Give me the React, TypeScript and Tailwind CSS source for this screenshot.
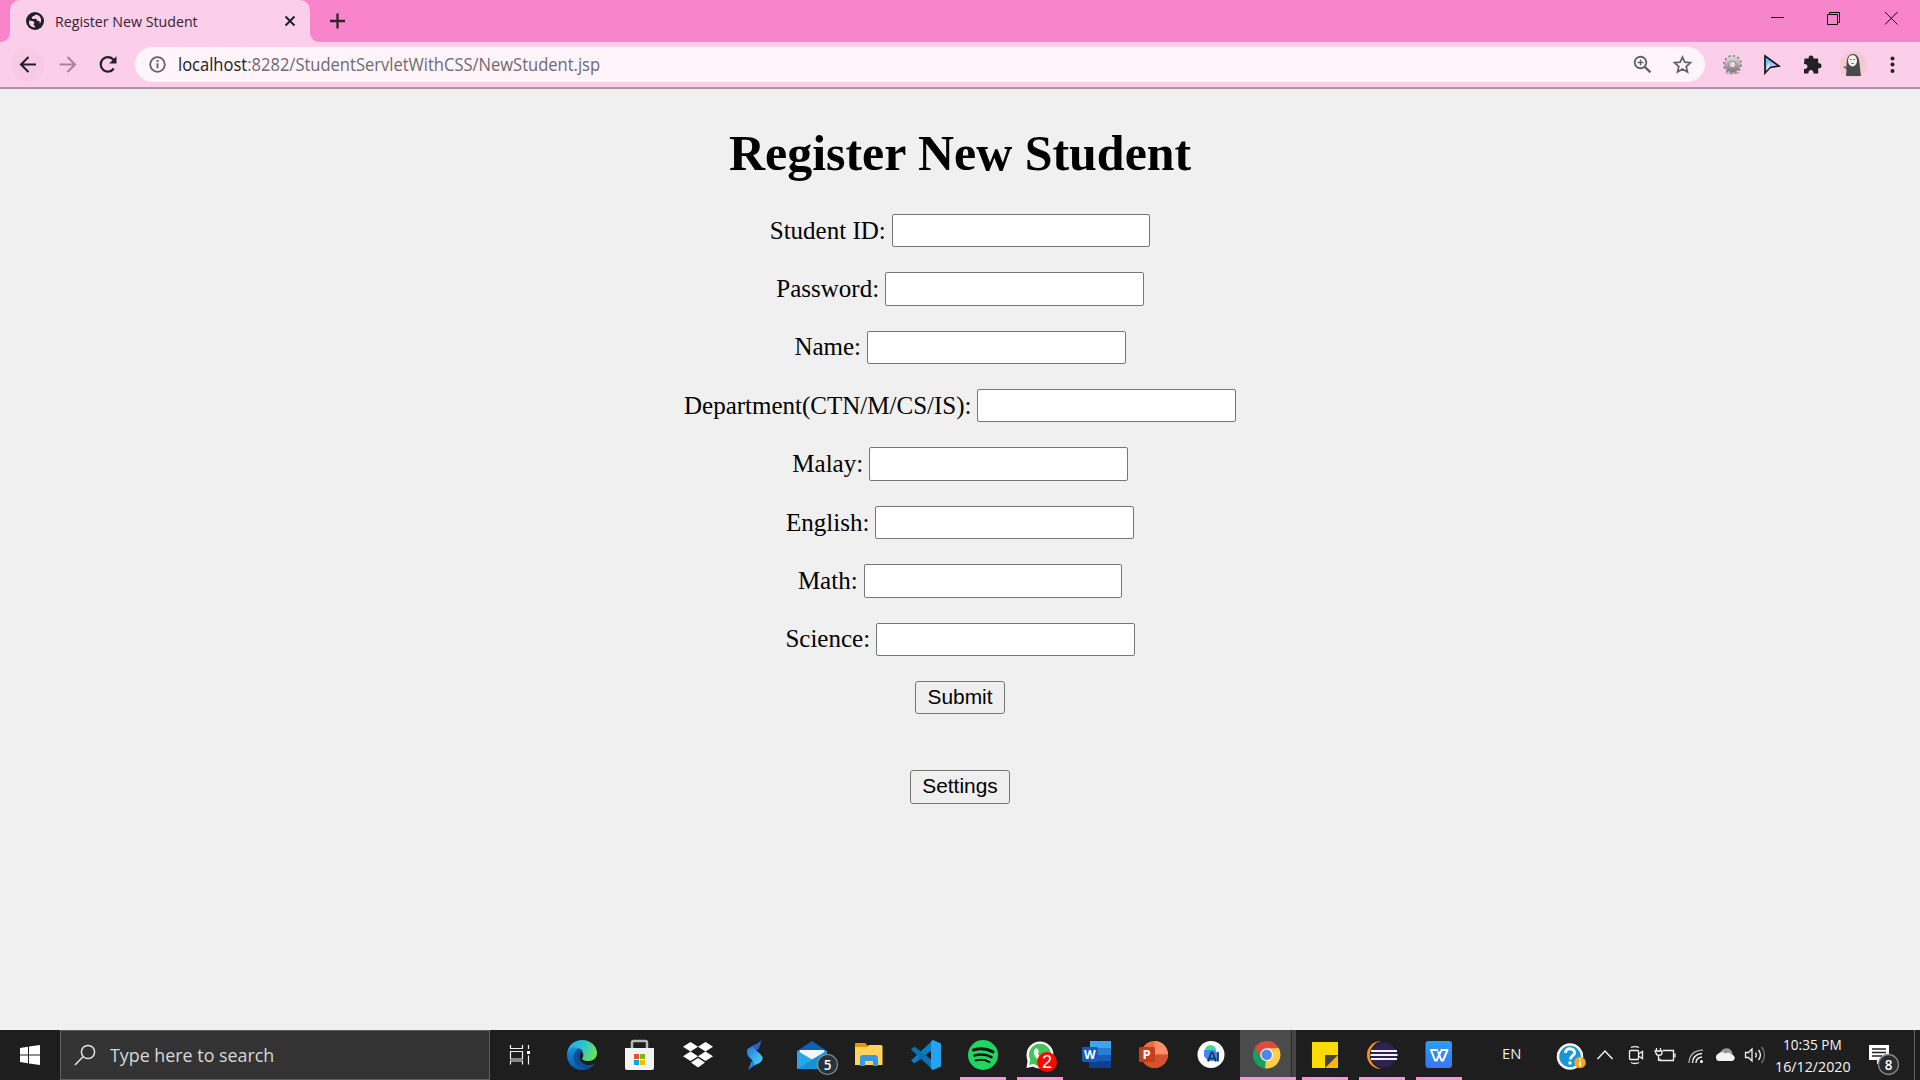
import React from "react";

const ui = "font-['Open_Sans','Noto_Sans',sans-serif]";

/** Horizontal slice of a bar: `x` is the slice's left edge, `w` its width. */
function Slice({ x, w, h = 50, children, className = "" }: { x: number; w: number; h?: number; children?: React.ReactNode; className?: string }) {
  return (
    <svg className={`shrink-0 ${className}`} width={w} height={h} viewBox={`${x} 0 ${w} ${h}`} fill="none">
      {children}
    </svg>
  );
}

/** Text fitted to a fixed width. */
function Label({ width, children, className }: { width: number; children: React.ReactNode; className: string }) {
  const ref = React.useRef<HTMLSpanElement>(null);
  const [scale, setScale] = React.useState(1);
  React.useLayoutEffect(() => {
    if (ref.current) setScale(width / ref.current.offsetWidth);
  }, [width]);
  return (
    <span className="block shrink-0" style={{ width }}>
      <span ref={ref} className={`inline-block origin-left whitespace-nowrap ${className}`} style={{ transform: `scaleX(${scale})` }}>
        {children}
      </span>
    </span>
  );
}

function TabStrip() {
  return (
    <div className="flex h-[42px] bg-[#f884cb]">
      <Slice x={0} w={10} h={42}>
        <path d="M10 32v10H0C6 42 10 38 10 32Z" fill="#fbcee9" />
      </Slice>
      <div className="flex h-[42px] w-[300px] items-center rounded-t-[10px] bg-[#fbcee9]">
        <Slice x={10} w={45} h={42}>
          <circle cx="35" cy="21" r="9" fill="#202124" />
          <path d="M29.3 20.5c2 .2 4.500.4 5 1.700.5 1.300-1 1.600-.6 2.900.4 1 1.600.7 1.500 2.400-4 .2-7.200-3-5.900-7Z" fill="#fbcee9" />
          <path d="M36 14.500c-1.200.5-1.600 1.800-3 1.800-1.200.3-1.700 1.800-.7 2.500 1.200.6 2.500-.5 3.800.1 1 .6.8 2.100 2.300 2.200 1.200.1 1.500 1.200 1.400 2.700 2.800-3.500.9-8.600-3.800-9.300Z" fill="#fbcee9" />
        </Slice>
        <Label width={143} className={`${ui} -mt-[2px] text-[14px] leading-5 text-[#35232f]`}>Register New Student</Label>
        <div className="grow" />
        <Slice x={270} w={40} h={42}>
          <path d="M285.500 16.500l9 9M294.500 16.500l-9 9" stroke="#202124" strokeWidth="2" />
        </Slice>
      </div>
      <Slice x={310} w={50} h={42}>
        <path d="M310 32v10h10c-6 0-10-4-10-10Z" fill="#fbcee9" />
        <path d="M337.500 13.500v15M330 21h15" stroke="#35202c" strokeWidth="2.300" />
      </Slice>
      <div className="grow" />
      <Slice x={1750} w={170} h={42} className="stroke-black">
        <path d="M1771 17.500h13" />
        <path d="M1827.500 14.500h10v10h-10zM1829.500 14v-1.500h10v10h-2" />
        <path d="M1885 12l12.500 12.500M1897.500 12l-12.500 12.500" />
      </Slice>
    </div>
  );
}

function Toolbar() {
  return (
    <div className="flex h-[47px] items-start border-b-2 border-[#b590a8] bg-[#fbcee9] pt-[5px]">
      <Slice x={0} w={135} h={35}>
        <circle cx="27.500" cy="17.500" r="17" fill="#f8cae5" />
        <path d="M36 17.500H21.500M28.500 10l-7.500 7.500 7.500 7.500" stroke="#202124" strokeWidth="2.100" />
        <path d="M59.500 17.500H74.500M67.500 10l7.500 7.500-7.500 7.500" stroke="#a9839d" strokeWidth="2.100" />
        <path d="M113.800 21.500a7.200 7.200 0 1 1-.8-9.200l2 2" stroke="#202124" strokeWidth="2.200" />
        <path d="M116.500 9.200v7.300h-7.300z" fill="#202124" />
      </Slice>
      <div className="flex h-[35px] w-[1570px] items-center rounded-full bg-[#fff4fa]">
        <Slice x={135} w={43} h={35}>
          <circle cx="157.500" cy="17.500" r="7.300" stroke="#5f6368" strokeWidth="1.800" />
          <path d="M157.500 16.300v5M157.500 13v1.900" stroke="#5f6368" strokeWidth="1.900" />
        </Slice>
        <Label width={422} className={`${ui} -mt-px text-[17.500px] leading-[34px] text-[#6d6a70]`}>
          <span className="text-[#202124]">localhost</span>:8282/StudentServletWithCSS/NewStudent.jsp
        </Label>
        <div className="grow" />
        <Slice x={1620} w={85} h={35} className="stroke-[#5f6368]">
          <circle cx="1640.500" cy="15.500" r="5.800" strokeWidth="1.900" />
          <path d="M1644.800 19.800l5.700 5.500" strokeWidth="2.300" />
          <path d="M1637.500 15.500h6M1640.500 12.500v6" strokeWidth="1.300" />
          <path d="M1682.500 10l2.300 5.200 5.700.5-4.300 3.800 1.300 5.600-5-3-5 3 1.300-5.600-4.300-3.800 5.700-.5z" strokeWidth="1.700" />
        </Slice>
      </div>
      <Slice x={1705} w={215} h={35}>
        <defs>
          <linearGradient id="gear" x1="0" y1="0" x2="0" y2="1">
            <stop stopColor="#d2d2d2" />
            <stop offset="1" stopColor="#858585" />
          </linearGradient>
          <linearGradient id="pointer" x1="0" y1="0" x2="1" y2="1">
            <stop offset=".2" stopColor="#5bd0f4" />
            <stop offset=".7" stopColor="#dcb8f5" />
            <stop offset="1" stopColor="#b16fe0" />
          </linearGradient>
        </defs>
        <ellipse cx="1732.500" cy="26" rx="8" ry="1.500" fill="#d9b0c9" />
        <circle cx="1732.500" cy="17.500" r="8.300" stroke="#8b8b8b" strokeWidth="2.600" strokeDasharray="2.300 2.046" />
        <circle cx="1732.500" cy="17.500" r="5.600" stroke="url(#gear)" strokeWidth="4.600" />
        <circle cx="1732.500" cy="17.500" r="3.400" stroke="#8e8e8e" />
        <path d="M1765 9v17l5-5.500 9-1.500z" fill="url(#pointer)" stroke="#15151f" strokeWidth="1.700" />
        <path d="M1766 24l2.300-8.500 1.700 4.300z" fill="#fff" opacity=".7" />
        <path d="M1804.500 11.500h4.200c-.9-4 5.600-4 4.700 0h4.800v4.700c4.500-.8 4.500 5.800 0 5v5.300h-4.700c.4-4.700-5.500-4.700-5.100 0h-4.400v-4.400c4.700.3 4.700-5.300 0-5z" fill="#202124" />
        <circle cx="1853" cy="17.500" r="13.500" fill="#f5c9d0" />
        <path d="M1846 29c1-7 0-11 1-16 1-8 11-8 12 0 1 5 1 9 2 16z" fill="#4b4a4b" />
        <path d="M1844 19.500l4 3" stroke="#4b4a4b" strokeWidth="1.500" />
        <ellipse cx="1852.500" cy="13.700" rx="4.500" ry="5.800" fill="#f4f0ec" />
        <path d="M1850 12.500h1.500M1853.500 12.500h1.500M1851.500 16.500h2" stroke="#555" strokeWidth="1.200" />
        <g fill="#202124">
          <circle cx="1892.500" cy="11.500" r="2" />
          <circle cx="1892.500" cy="17.500" r="2" />
          <circle cx="1892.500" cy="24" r="2" />
        </g>
      </Slice>
    </div>
  );
}

const fields = ["Student ID:", "Password:", "Name:", "Department(CTN/M/CS/IS):", "Malay:", "English:", "Math:", "Science:"];

const buttonClass =
  "h-[33.500px] rounded-[3px] border border-[#767676] bg-[#efefef] text-center font-['Liberation_Sans',Arial,sans-serif] text-[20.900px] leading-none text-black";

function RegisterForm() {
  return (
    <main className="flex h-[941px] flex-col items-center bg-[#f0f0f0] font-['Liberation_Serif',serif] text-black">
      <h1 className="mt-[36px] h-[56px] text-[51px] leading-[57px] font-bold">
        <Label width={462} className="">Register New Student</Label>
      </h1>
      <div className="mt-[32.800px] flex flex-col items-center gap-[24.900px]">
        {fields.map((name) => (
          <label key={name} className="flex h-[33.500px] items-center gap-1.5 text-[25px] leading-[33px]">
            <span className="-mt-px">{name}</span>
            <input
              type={name === "Password:" ? "password" : "text"}
              className="h-[33.500px] w-[258.500px] rounded-[2px] border border-[#767676] bg-white px-1 text-[20px] outline-none"
            />
          </label>
        ))}
        <button className={`${buttonClass} w-[90px]`}>Submit</button>
      </div>
      <button className={`${buttonClass} mt-[55.700px] w-[100px]`}>Settings</button>
    </main>
  );
}

function Running({ x, w = 46 }: { x: number; w?: number }) {
  return <rect x={x} y="47" width={w} height="3" fill="#ff93d1" />;
}

function TaskbarApps() {
  return (
    <>
      <Slice x={553} w={58}>
        <defs>
          <linearGradient id="edgeTop" x1="0" y1=".3" x2="1" y2=".6">
            <stop stopColor="#2aa5dd" />
            <stop offset=".5" stopColor="#2fc4cf" />
            <stop offset="1" stopColor="#6fe34c" />
          </linearGradient>
          <linearGradient id="edgeLow" x1="0" y1="0" x2="0" y2="1">
            <stop stopColor="#1493dd" />
            <stop offset="1" stopColor="#0b55a8" />
          </linearGradient>
        </defs>
        <path d="M567 24C568 15 574 10 582 10c9 0 15 6.500 15 13 0 5-4 8-8.500 8-5 0-7-1.500-6-3 2-3 .5-8-4-9.500-5-1-10 1-11.500 5.500Z" fill="url(#edgeTop)" />
        <path d="M567 24c1-5 7-8 12-5.500-3 2-5 5-4.500 9 1 6 8 11 20 6.500C591 38 587 40 582 40c-9 0-15.500-7-15-16Z" fill="url(#edgeLow)" />
        <path d="M579 18.500c-7 3-7 12-1.500 17 5 4 12 4 17-1.500-4 2-9 1.500-12-1s-4.500-6-2-10c1-1.500 2-2 2-2s-1-2-3.500-2.500Z" fill="#0d4f97" />
      </Slice>
      <Slice x={611} w={57}>
        <path d="M632 19v-6.500a1.500 1.500 0 0 1 1.500-1.500h12a1.500 1.500 0 0 1 1.500 1.500V19" stroke="#b9b9b9" strokeWidth="2.500" />
        <path d="M625 18h29v20a2 2 0 0 1-2 2h-25a2 2 0 0 1-2-2z" fill="#f3f3f3" />
        <path d="M634 24h5v5h-5z" fill="#f25022" />
        <path d="M640 24h5v5h-5z" fill="#7fba00" />
        <path d="M634 30h5v5h-5z" fill="#00a4ef" />
        <path d="M640 30h5v5h-5z" fill="#ffb900" />
      </Slice>
      <Slice x={668} w={57}>
        <path d="M690.500 12l7.500 4.700-7.500 4.700-7.500-4.700zM705.500 12l7.500 4.700-7.500 4.700-7.500-4.700zM690.500 21.500l7.500 4.700-7.500 4.700-7.500-4.700zM705.500 21.500l7.500 4.700-7.500 4.700-7.500-4.700zM698 28l7 4.500-7 5-7-5z" fill="#fff" />
      </Slice>
      <Slice x={725} w={57}>
        <defs>
          <linearGradient id="ribbon" x1="0" y1="0" x2="1" y2="1">
            <stop stopColor="#1f74d6" />
            <stop offset=".5" stopColor="#38a8ee" />
            <stop offset="1" stopColor="#3fdde5" />
          </linearGradient>
        </defs>
        <path d="M761.500 10l-2.500 8.500-5.500 3.500-6.500 2c0-4 2-6.500 6-8.500 3.500-1.500 6-3 8.500-5.500Z" fill="#2f5fc4" />
        <path d="M748 40.500l3-8.500 5-4 6.500-2c0 4-2 6.500-6 8.500-3.500 1.500-6 3.500-8.500 6Z" fill="#2a7fdc" />
        <path d="M747 20.500c2 3 7 4.500 12 5.500-1 3-3 5-5 7-1-3-6-5-7-8Z" fill="#1c57b5" />
        <path d="M747 19l6-2.500c1 4 9 6.500 9.500 11.500 0 2-1 3.500-3 5l-5.500 2c1-5-8-8-7-16Z" fill="url(#ribbon)" />
      </Slice>
      <Slice x={782} w={57}>
        <path d="M797 21l15-10 15 10v18h-30z" fill="#0b62b5" />
        <path d="M799.500 20h25v10h-25z" fill="#f5f5f5" />
        <path d="M797 20.500l15 9 15-9V39h-30z" fill="#27a7ea" />
        <path d="M797 39l18-11 12-7v18z" fill="#1792d9" />
      </Slice>
      <Slice x={839} w={57}>
        <path d="M855 14a1 1 0 0 1 1-1h9l3 3v5h-13z" fill="#e19b00" />
        <path d="M855 17h12l2-2h12a1.500 1.500 0 0 1 1.500 1.500V35H855z" fill="#ffd35e" />
        <path d="M860 36v-8a3 3 0 0 1 3-3h12a3 3 0 0 1 3 3v8h-5v-5h-8v5z" fill="#3a97e1" />
      </Slice>
      <Slice x={896} w={57}>
        <path d="M933 10v9l-18.500 14.500-3.500-3z" fill="#087ec9" />
        <path d="M933 40v-9l-18.500-14.500-3.500 3z" fill="#0870b4" />
        <path d="M933 10l8 3.500v23l-8 3.500-2-1.500V11.500z" fill="#24a4ef" />
      </Slice>
      <Slice x={953} w={58}>
        <circle cx="983" cy="25" r="15" fill="#1ed760" />
        <path d="M973.500 20c7-2.200 14-1.200 19.500 1.800" stroke="#111" strokeWidth="3.200" strokeLinecap="round" />
        <path d="M974.500 25.500c6-1.600 12-1 17 1.700" stroke="#111" strokeWidth="2.500" strokeLinecap="round" />
        <path d="M975.500 30.500c5-1.300 10-.7 14 1.600" stroke="#111" strokeWidth="2" strokeLinecap="round" />
        <Running x={960} />
      </Slice>
      <Slice x={1011} w={57}>
        <circle cx="1040" cy="25" r="13.500" fill="#fff" />
        <path d="M1028 28l-1.500 10 9-2z" fill="#fff" />
        <circle cx="1040" cy="24.800" r="11" fill="#48c35a" />
        <path d="M1030.500 29l-1.500 6 6-1.500z" fill="#48c35a" />
        <path d="M1035 19c2-2 3 0 3.800 2.200.3 1.200-1.300 1.500-1 2.500 1.500 2.800 3 4 5.200 5l2-1.500 3.500 2c-2 5-8 2.500-11 0-3-3-5-7-2.500-10.200Z" fill="#fff" />
        <circle cx="1047" cy="32" r="10" fill="#ff0500" />
        <text x="1047" y="38" textAnchor="middle" className="fill-white font-['Liberation_Sans',sans-serif] text-[18px]">2</text>
        <Running x={1017} />
      </Slice>
      <Slice x={1068} w={57}>
        <path d="M1090 11h21v7h-21z" fill="#41a5ee" />
        <path d="M1089 18h22v7h-22z" fill="#2b7cd3" />
        <path d="M1089 25h22v7h-22z" fill="#185abd" />
        <path d="M1089 31h22v7h-22z" fill="#103f91" />
        <rect x="1082" y="17" width="16" height="15" rx="1.500" fill="#185abd" />
        <text x="1089.800" y="29" textAnchor="middle" className="fill-white font-['Open_Sans',sans-serif] text-[12px] font-bold">W</text>
      </Slice>
      <Slice x={1125} w={57}>
        <circle cx="1154.500" cy="24.500" r="13.500" fill="#ed6c47" />
        <path d="M1154.500 11a13.500 13.500 0 0 1 13.500 13.500h-13.500z" fill="#ff8f6b" />
        <path d="M1141 24.500a13.500 13.500 0 0 0 27 0z" fill="#d35230" />
        <rect x="1139" y="17" width="16" height="15" rx="1.500" fill="#c43e1c" />
        <text x="1146.500" y="29.300" textAnchor="middle" className="fill-white font-['Open_Sans',sans-serif] text-[13px] font-bold">P</text>
      </Slice>
      <Slice x={1182} w={57}>
        <circle cx="1211" cy="24.500" r="13.500" fill="#fff" />
        <path d="M1205 20c0-6.500 11-6.500 11 0z" fill="#3ddc84" />
        <path d="M1204 20h11l3 4v7h-10l-4-5z" fill="#4285f4" />
        <path d="M1208 31.500l3.300-9h1.400l3.300 9M1210 28.500h4.500M1218 22v9.500" stroke="#14364a" strokeWidth="1.700" />
      </Slice>
      <Slice x={1239} w={57}>
        <path d="M1240 0h51v50h-51z" fill="#4b4b4b" />
        <path d="M1291 0h1v50h-1z" fill="#292929" />
        <path d="M1292 0h4v50h-4z" fill="#454545" />
        <path d="M1266.700 24.700L1254.700 17.900A13.800 13.800 0 0 1 1278.700 17.900z" fill="#dd4b3e" />
        <path d="M1266.700 24.700L1278.700 17.900A13.800 13.800 0 0 1 1266.700 38.500z" fill="#ffcd46" />
        <path d="M1266.700 24.700L1266.700 38.500A13.800 13.800 0 0 1 1254.700 17.900z" fill="#17a05d" />
        <path d="M1266.700 18.200h12.100l.5 1.500-8 1.500z" fill="#ffcd46" />
        <path d="M1272.300 27.900l-5.800 10.600h-1.500l1-8.500z" fill="#ffcd46" />
        <path d="M1261.100 27.900l-6.500-10.100 1-1.500 5.500 5z" fill="#dd4b3e" />
        <circle cx="1266.700" cy="24.700" r="6.500" fill="#f1f1f1" />
        <circle cx="1266.700" cy="24.700" r="5.200" fill="#4a88f0" />
        <Running x={1240} w={56} />
      </Slice>
      <Slice x={1296} w={57}>
        <path d="M1312 12h26v13l-13 13h-13z" fill="#fddb00" />
        <path d="M1325 25h13v13h-13z" fill="#fcb900" />
        <path d="M1325 25h13l-13 13z" fill="#444" />
        <Running x={1302} />
      </Slice>
      <Slice x={1353} w={58}>
        <circle cx="1381" cy="25" r="14" fill="#f7941e" />
        <circle cx="1384" cy="25" r="14.200" fill="#1e1e1e" />
        <circle cx="1384" cy="25" r="12.700" fill="#2c2255" />
        <path d="M1371 21h26M1370.500 25h27M1371 29h26" stroke="#f4f1fa" strokeWidth="1.900" />
        <Running x={1359} />
      </Slice>
      <Slice x={1411} w={57}>
        <defs>
          <linearGradient id="writer" x1="0" y1="0" x2="0" y2="1">
            <stop stopColor="#2f9df4" />
            <stop offset="1" stopColor="#3478f6" />
          </linearGradient>
        </defs>
        <rect x="1425.500" y="11" width="26.500" height="27" rx="3" fill="url(#writer)" />
        <path d="M1438 20h-7l4 10.500h1.500l5-10.500h6l-4.500 10.500h-1.500l-3.500-9" stroke="#fff" strokeWidth="2" strokeLinejoin="round" />
        <Running x={1416} />
      </Slice>
    </>
  );
}

function Tray() {
  return (
    <>
      <div className={`${ui} flex w-[62px] justify-start pt-[13px] pl-[34px] text-[14px] text-[#eee]`}>
        <Label width={19} className="leading-5">EN</Label>
      </div>
      <Slice x={1530} w={240}>
        <circle cx="1570" cy="26.500" r="12" fill="#1597d8" stroke="#f4f8fa" strokeWidth="2.500" />
        <path d="M1565.500 23c0-6 9.500-5.500 9 0-.3 3-4 3-4.200 6.500M1570 31.500v3" stroke="#fff" strokeWidth="3" />
        <circle cx="1580" cy="32.500" r="5.800" fill="#f5a81c" />
        <path d="M1580 31.500v4.500M1580 28.500v1.800" stroke="#fff" strokeWidth="1.800" />
        <g stroke="#f2f2f2" strokeWidth="1.300">
          <path d="M1597.500 29l7.500-8 7.500 8" strokeWidth="1.500" />
          <rect x="1629.500" y="20.500" width="9" height="9" rx="1" />
          <path d="M1638.500 24l4-2.500v7l-4-2.500M1631 17.500c2-1.300 6-1.300 8 0M1631 32.500c2 1.300 6 1.300 8 0" />
          <path d="M1663 20.500h10.500v10H1660v-2M1675 23.500v4M1656.500 18v3M1660.500 18v3M1655 21h7v2c0 3-6 3-6 0zM1658.500 25v6" />
          <circle cx="1701.500" cy="31.500" r="1.500" fill="#fff" stroke="none" />
          <path d="M1696 33c0-3 2-5.500 6-6M1692.500 33c.3-5.500 4-9 9.500-9.500" />
          <path d="M1689 33c.3-8 5.500-12.500 14-13" stroke="#aaa" />
        </g>
        <path d="M1720 24c1-7 11-8 12.500-1v4h-13z" fill="#999" />
        <path d="M1718.500 31a4 4 0 0 1 0-7.500c2-2 5-1.500 7 0 2-1.500 5-1 6 1 4 .5 4.500 6 .5 6.500z" fill="#f3f3f3" />
        <g stroke="#f2f2f2" strokeWidth="1.300">
          <path d="M1745.500 22.500h3l3.500-3.500v12l-3.500-3.500h-3zM1755.500 22.500c1 1.500 1 3.500 0 5M1758.500 20c2.300 3 2.300 7 0 10" />
          <path d="M1761.500 17c4 4.500 4 11 0 16" stroke="#777" />
        </g>
      </Slice>
      <div className={`${ui} flex w-[85px] flex-col items-center pt-[2.500px] text-[15px] leading-[22.500px] text-[#f5f5f5]`}>
        <Label width={59} className="">10:35 PM</Label>
        <Label width={76} className="">16/12/2020</Label>
      </div>
      <Slice x={1855} w={65}>
        <path d="M1869 15h20v15h-8l-4 4.500V30h-8z" fill="#fff" />
        <path d="M1872 19h14M1872 22.500h14M1872 26h10" stroke="#222" strokeWidth="1.300" />
        <circle cx="1888.500" cy="34.500" r="10" fill="#2b2b2b" stroke="#858585" strokeWidth="1.300" />
        <text x="1888.500" y="39.500" textAnchor="middle" className="fill-white font-['Open_Sans',sans-serif] text-[13.500px] font-semibold">8</text>
        <path d="M1914.500 0v50" stroke="#666" />
      </Slice>
    </>
  );
}

function Taskbar() {
  return (
    <footer className="relative flex h-[50px] bg-[#1e1e1e]">
      <Slice x={0} w={60}>
        <path d="M20 18l8-1.200v7.700h-8zM29 16.600l11-1.600v9.500H29zM20 25.500h8v7.700L20 32zM29 25.500h11V35l-11-1.600z" fill="#fff" />
      </Slice>
      <div className="flex h-[50px] w-[430px] items-center border border-[#606060] bg-[#333]">
        <Slice x={61} w={49} h={48}>
          <circle cx="88" cy="21" r="6.600" stroke="#e5e5e5" strokeWidth="1.500" />
          <path d="M83 25.800l-8 8.200" stroke="#e5e5e5" strokeWidth="1.500" />
        </Slice>
        <Label width={164} className={`${ui} text-[18.500px] leading-[46px] text-[#d8d8d8]`}>Type here to search</Label>
      </div>
      <Slice x={490} w={63} className="stroke-[#f0f0f0]">
        <path d="M510.500 15v3.500h12V15M510.500 34.500v-3.500h12v3.500M510.500 21.500h12v7.500h-12zM528.500 15v4M528.500 25.500v9" strokeWidth="1.200" />
        <path d="M527 21h3v3h-3z" fill="#fff" stroke="none" />
      </Slice>
      <TaskbarApps />
      <Tray />
      <svg className="absolute top-[23px] left-[816px]" width="24" height="24" viewBox="0 0 24 24">
        <circle cx="11.500" cy="11.500" r="10" fill="#24333d" stroke="#8b9195" strokeWidth="1.200" />
        <text x="11.500" y="16.500" textAnchor="middle" className="fill-white font-['Open_Sans',sans-serif] text-[13.500px] font-semibold">5</text>
      </svg>
    </footer>
  );
}

export default function App() {
  return (
    <div className="flex h-[1080px] w-[1920px] flex-col overflow-hidden">
      <TabStrip />
      <Toolbar />
      <RegisterForm />
      <Taskbar />
    </div>
  );
}
